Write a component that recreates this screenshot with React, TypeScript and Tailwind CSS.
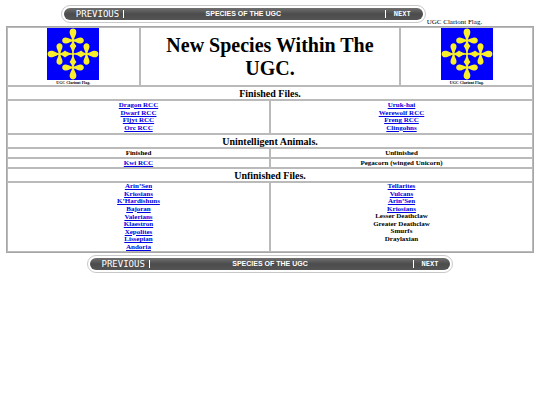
const finished = {
  left: ['Dragon RCC', 'Dwarf RCC', 'Fljyt RCC', 'Orc RCC'],
  right: ['Uruk-hai', 'Werewolf RCC', 'Freng RCC', 'Clingohns'],
};

const unfinished = {
  left: [
    'Arin’Sen',
    'Kriosians',
    'K’Hardishuns',
    'Bajoran',
    'Valerians',
    'Klaestron',
    'Xepolites',
    'Lissepian',
    'Andoria',
  ],
  rightLinks: ['Tellarites', 'Vulcans', 'Arin’Sen', 'Kriosians'],
  rightPlain: ['Lesser Deathclaw', 'Greater Deathclaw', 'Smurfs', 'Draylaxian'],
};

const cell = 'border border-[#bababa] p-0';

function FlagArm({ angle }: { angle: number }) {
  return (
    <g transform={`rotate(${angle} 26 26)`}>
      {/* outer drop */}
      <path d="M26 0.6 C29 0.6 29.9 3.6 29 6.2 C28.1 8.8 26.9 10 26.7 12.5 H25.3 C25.1 10 23.9 8.8 23 6.2 C22.1 3.6 23 0.6 26 0.6 Z" />
      {/* side drops */}
      <path d="M26 11.6 C29 11.5 30.5 9.8 33 9.5 C35.6 9.3 36.8 10.8 36.8 12.5 C36.8 14.2 35.6 15.7 33 15.5 C30.5 15.2 29 13.5 26 13.4 C23 13.5 21.5 15.2 19 15.5 C16.4 15.7 15.2 14.2 15.2 12.5 C15.2 10.8 16.4 9.3 19 9.5 C21.5 9.8 23 11.5 26 11.6 Z" />
      {/* inner diamond and stem */}
      <path d="M25.3 12 H26.7 C26.8 15 27.6 15.5 29.4 18 C27.6 20.8 26.9 21.8 26.6 26 H25.4 C25.1 21.8 24.4 20.8 22.6 18 C24.4 15.5 25.2 15 25.3 12 Z" />
    </g>
  );
}

function Flag() {
  return (
    <figure className="flex flex-col items-center">
      <svg viewBox="0 0 52 52" className="size-[52px] bg-[#0000fb]" fill="#f8ee2c" role="img" aria-label="UGC Clariont Flag">
        <FlagArm angle={0} />
        <FlagArm angle={90} />
        <FlagArm angle={180} />
        <FlagArm angle={270} />
        <circle cx="26" cy="26" r="1.4" />
      </svg>
      <figcaption className="text-[4px] leading-[5px] font-bold">UGC Clariont Flag.</figcaption>
    </figure>
  );
}

function NavBar() {
  return (
    <nav className="w-[69.5%] rounded-full border border-[#c8c8c8] bg-white p-[2px]">
      <div className="grid h-[12px] grid-cols-[1fr_auto_1fr] items-center rounded-full bg-linear-to-b from-[#707070] via-[#4c4c4c] to-[#555] px-3 text-white">
        <a href="#previous" className="flex items-center gap-1 font-['DejaVu_Sans_Mono',monospace] text-[9px] leading-[10px]">
          PREVIOUS
          <span className="h-2 w-px bg-white" />
        </a>
        <span className="font-['Liberation_Sans',sans-serif] text-[7px] leading-[8px] font-bold">
          SPECIES OF THE UGC
        </span>
        <a href="#next" className="flex items-center justify-end gap-2 font-['DejaVu_Sans_Mono',monospace] text-[7px] leading-[10px] font-bold">
          <span className="h-2 w-px bg-white" />
          NEXT
        </a>
      </div>
    </nav>
  );
}

function SpeciesLink({ name }: { name: string }) {
  return (
    <li>
      <a href="#species" className="text-[#0000e0] underline">
        {name}
      </a>
    </li>
  );
}

function SectionRow({ title }: { title: string }) {
  return (
    <tr>
      <th colSpan={4} className={`${cell} h-[14px] text-[10px] leading-[11px]`}>
        {title}
      </th>
    </tr>
  );
}

export default function App() {
  return (
    <main className="px-[6px] pt-[5px] font-['Liberation_Serif',serif] text-[7px] leading-[7px] text-black">
      <div className="flex items-end justify-center pl-[3px]">
        <NavBar />
        <span className="-mb-[3px] ml-px text-[7px] leading-[8px] whitespace-nowrap">UGC Clariont Flag.</span>
      </div>

      <table className="mt-[3px] w-full table-fixed border-separate border-spacing-0 border border-[#a6a6a6] text-center font-bold">
        <colgroup>
          <col className="w-[25.2%]" />
          <col className="w-[24.8%]" />
          <col className="w-[24.8%]" />
          <col className="w-[25.2%]" />
        </colgroup>
        <tbody>
          <tr>
            <td className={cell}>
              <Flag />
            </td>
            <td colSpan={2} className={cell}>
              <h1 className="text-[20px] leading-[23px] font-bold">New Species Within The UGC.</h1>
            </td>
            <td className={cell}>
              <Flag />
            </td>
          </tr>
          <SectionRow title="Finished Files." />
          <tr>
            {[finished.left, finished.right].map((names) => (
              <td key={names[0]} colSpan={2} className={`${cell} py-px`}>
                <ul className="flex h-[30px] flex-col justify-between">
                  {names.map((name) => (
                    <SpeciesLink key={name} name={name} />
                  ))}
                </ul>
              </td>
            ))}
          </tr>
          <SectionRow title="Unintelligent Animals." />
          <tr>
            <th colSpan={2} className={`${cell} leading-[8px]`}>Finished</th>
            <th colSpan={2} className={`${cell} leading-[8px]`}>Unfinished</th>
          </tr>
          <tr>
            <td colSpan={2} className={`${cell} leading-[8px]`}>
              <a href="#species" className="text-[#0000e0] underline">Kwi RCC</a>
            </td>
            <td colSpan={2} className={`${cell} leading-[8px]`}>Pegacorn (winged Unicorn)</td>
          </tr>
          <SectionRow title="Unfinished Files." />
          <tr>
            <td colSpan={2} className={`${cell} align-top`}>
              <ul className="flex h-[68px] flex-col justify-between">
                {unfinished.left.map((name) => (
                  <SpeciesLink key={name} name={name} />
                ))}
              </ul>
            </td>
            <td colSpan={2} className={`${cell} align-top`}>
              <ul className="flex h-[60px] flex-col justify-between">
                {unfinished.rightLinks.map((name) => (
                  <SpeciesLink key={name} name={name} />
                ))}
                {unfinished.rightPlain.map((name) => (
                  <li key={name}>{name}</li>
                ))}
              </ul>
            </td>
          </tr>
        </tbody>
      </table>

      <div className="mt-[2px] flex justify-center">
        <NavBar />
      </div>
    </main>
  );
}
